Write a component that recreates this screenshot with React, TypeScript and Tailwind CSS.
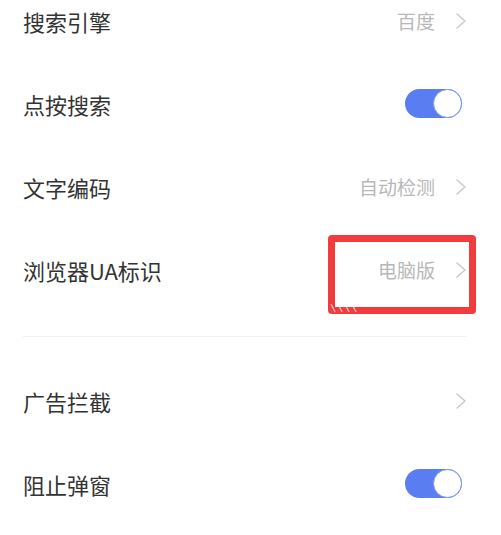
import React from "react";

const font = { fontFamily: '"Noto Sans CJK SC", "Noto Sans", sans-serif' };

function Chevron() {
  return (
    <svg width="12" height="16" viewBox="0 0 12 16" className="shrink-0">
      <path d="M2 1 L10 8 L2 15" fill="none" stroke="#c9c9c9" strokeWidth="1.5" strokeLinecap="round" strokeLinejoin="round" />
    </svg>
  );
}

function Toggle() {
  return (
    <div className="relative mr-[5px] h-[29px] w-[57px] rounded-full bg-[#5a7df1]">
      <div className="absolute right-0 top-0 h-[29px] w-[29px] rounded-full border-[1.5px] border-[#7d96ef] bg-white" />
    </div>
  );
}

function Row({ label, value, chevron, toggle, extra, className = "" }: { label: string; value?: string; chevron?: boolean; toggle?: boolean; extra?: React.ReactNode; className?: string }) {
  return (
    <div className={`relative flex h-[83px] items-center justify-between pl-[23px] pr-[34px] ${className}`}>
      <span className="text-[22px] leading-none text-[#333333]">{label}</span>
      <div className="flex items-center gap-[20px]">
        {value && <span className="text-[19px] leading-none text-[#b8b8b8]">{value}</span>}
        {chevron && <Chevron />}
        {toggle && <Toggle />}
      </div>
      {extra}
    </div>
  );
}

export default function App() {
  return (
    <div className="h-[535px] w-[501px] overflow-hidden bg-white" style={font}>
      <div className="flex flex-col">
        <Row label="搜索引擎" value="百度" chevron className="-mt-[21px]" />
        <Row label="点按搜索" toggle />
        <Row label="文字编码" value="自动检测" chevron />
        <Row
          label="浏览器UA标识"
          value="电脑版"
          chevron
          extra={
            <>
              <div className="absolute left-[328px] top-[7px] h-[79px] w-[148px] rounded-[4px] border-[7px] border-[#f23b3b]" />
              <svg className="absolute left-[329px] top-[75px]" width="30" height="10" viewBox="0 0 30 10">
                <g stroke="#ffffff" strokeOpacity="0.6" strokeWidth="1.5">
                  <line x1="2" y1="1" x2="6" y2="9" />
                  <line x1="9" y1="1" x2="13" y2="9" />
                  <line x1="16" y1="1" x2="20" y2="9" />
                  <line x1="23" y1="1" x2="27" y2="9" />
                </g>
              </svg>
            </>
          }
        />
        <div className="mx-[23px] mr-[34px] mt-[25px] h-px bg-[#f1f1f1]" />
        <Row label="广告拦截" chevron className="mt-[22px]" />
        <Row label="阻止弹窗" toggle />
      </div>
    </div>
  );
}
